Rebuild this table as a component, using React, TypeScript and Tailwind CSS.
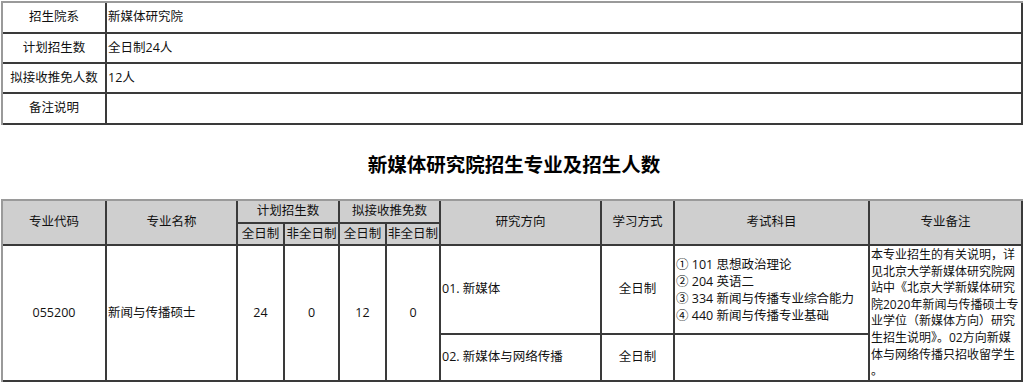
const FONT = "font-['Open_Sans','Noto_Sans_CJK_SC',sans-serif]"

const INFO_ROWS = [
  { label: '招生院系', value: '新媒体研究院', h: 'h-[31px]' },
  { label: '计划招生数', value: '全日制24人', h: 'h-[30px]' },
  { label: '拟接收推免人数', value: '12人', h: 'h-[30px]' },
  { label: '备注说明', value: '', h: 'h-[31px]' },
]

const SUBJECTS = [
  '① 101 思想政治理论',
  '② 204 英语二',
  '③ 334 新闻与传播专业综合能力',
  '④ 440 新闻与传播专业基础',
]

const REMARK_LINES = [
  '本专业招生的有关说明，详',
  '见北京大学新媒体研究院网',
  '站中《北京大学新媒体研究',
  '院2020年新闻与传播硕士专',
  '业学位（新媒体方向）研究',
  '生招生说明》。02方向新媒',
  '体与网络传播只招收留学生',
  '。',
]

// every cell draws its own right and bottom rule, the frame draws top and left
const cell = 'border-r-2 border-b-2 border-[#3a3a3a] flex items-center'
const head = `${cell} justify-center bg-[#cfcfcf]`

export default function App() {
  return (
    <div className={`${FONT} text-[12.5px] text-[#111] bg-white w-[1027px] h-[389px] pl-[1px] pt-[1px] overflow-hidden`}>
      {/* Department summary */}
      <div className="w-[1022px] border-t-2 border-l-2 border-[#9a9a9a]">
        {INFO_ROWS.map((row) => (
          <div key={row.label} className={`grid grid-cols-[104px_1fr] ${row.h}`}>
            <div className={`${cell} justify-center`}>{row.label}</div>
            <div className={`${cell} pl-[1px]`}>{row.value}</div>
          </div>
        ))}
      </div>

      <h1 className="mt-[26px] mb-[20px] h-[28px] text-center text-[19.5px] leading-[28px] font-bold text-black">
        新媒体研究院招生专业及招生人数
      </h1>

      {/* Majors table */}
      <div className="w-[1022px] border-t-2 border-l-2 border-[#9a9a9a] grid grid-cols-[104px_131px_47px_55px_47px_54px_161px_73px_195px_153px] grid-rows-[23px_22px_89px_47px]">
        <div className={`${head} row-span-2`}>专业代码</div>
        <div className={`${head} row-span-2`}>专业名称</div>
        <div className={`${head} col-span-2`}>计划招生数</div>
        <div className={`${head} col-span-2`}>拟接收推免数</div>
        <div className={`${head} row-span-2`}>研究方向</div>
        <div className={`${head} row-span-2`}>学习方式</div>
        <div className={`${head} row-span-2`}>考试科目</div>
        <div className={`${head} row-span-2`}>专业备注</div>
        <div className={head}>全日制</div>
        <div className={head}>非全日制</div>
        <div className={head}>全日制</div>
        <div className={head}>非全日制</div>

        <div className={`${cell} row-span-2 justify-center`}>055200</div>
        <div className={`${cell} row-span-2 pl-[1px]`}>新闻与传播硕士</div>
        <div className={`${cell} row-span-2 justify-center`}>24</div>
        <div className={`${cell} row-span-2 justify-center`}>0</div>
        <div className={`${cell} row-span-2 justify-center`}>12</div>
        <div className={`${cell} row-span-2 justify-center`}>0</div>
        <div className={`${cell} pl-[1px]`}>01. 新媒体</div>
        <div className={`${cell} justify-center`}>全日制</div>
        <div className={`${cell} pl-[1px]`}>
          <div className="leading-[17px]">
            {SUBJECTS.map((s) => (
              <div key={s}>{s}</div>
            ))}
          </div>
        </div>
        <div className="row-span-2 border-r-2 border-b-2 border-[#3a3a3a] pl-[1px] pt-[1px] text-[12px] leading-[16.6px]">
          {REMARK_LINES.map((line) => (
            <div key={line} className="whitespace-nowrap">{line}</div>
          ))}
        </div>
        <div className={`${cell} pl-[1px]`}>02. 新媒体与网络传播</div>
        <div className={`${cell} justify-center`}>全日制</div>
        <div className={cell}></div>
      </div>
    </div>
  )
}
